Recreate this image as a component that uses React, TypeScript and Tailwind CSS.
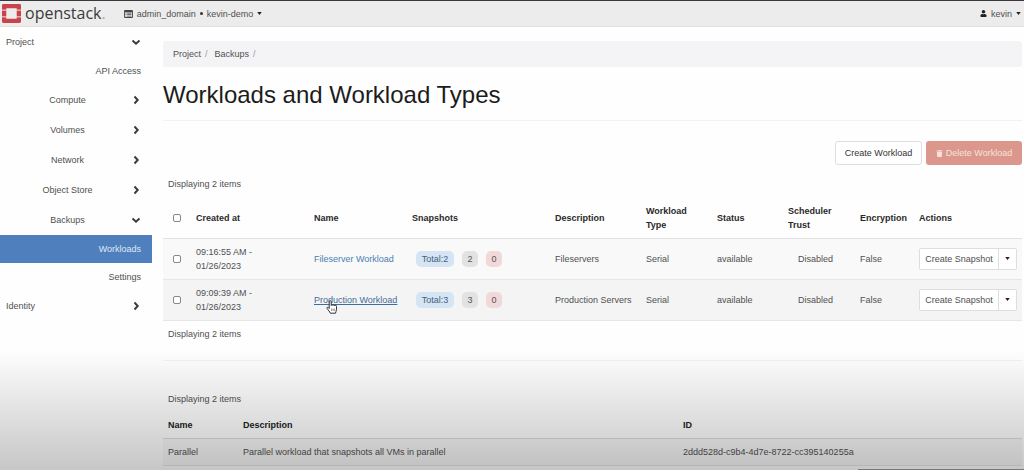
import { FaTrash, FaUser } from "react-icons/fa";

function Caret() {
  return (
    <svg viewBox="0 0 6 4" className="h-[3px] w-[5px] shrink-0 fill-[#222]" aria-hidden="true">
      <path d="M0 0h6L3 4z" />
    </svg>
  );
}

function Chevron({ open }: { open: boolean }) {
  return (
    <svg
      viewBox="0 0 10 10"
      className="size-[10px] shrink-0 fill-none stroke-[#3c3c3c] stroke-2"
      aria-hidden="true"
    >
      <path d={open ? "M1.500 3.500l3.500 3.200 3.500-3.200" : "M3.500 1.500l3.200 3.500-3.200 3.500"} />
    </svg>
  );
}

function Logo() {
  return (
    <a href="#home" className="flex items-center gap-[4px]" aria-label="openstack">
      <svg viewBox="0 0 20 20" className="size-[19px]" aria-hidden="true">
        <path
          fill="#c9434b"
          d="M1.500 0h17A1.500 1.500 0 0 1 20 1.500V6h-4.500V4.500h-11V6H0V1.500A1.500 1.500 0 0 1 1.500 0zM0 7.300h4.500v5.400H0zM15.500 7.300H20v5.400h-4.500zM0 14h4.500v1.500h11V14H20v4.500a1.500 1.500 0 0 1-1.500 1.500h-17A1.500 1.500 0 0 1 0 18.500z"
        />
        <path fill="#e9a3a4" d="M0 6h4.500v1.300H0zM15.500 6H20v1.300h-4.500zM0 12.700h4.500V14H0zM15.500 12.700H20V14h-4.500z" />
      </svg>
      <span className="-mt-[2px] font-['Open_Sans',sans-serif] text-[16px] leading-5 font-medium text-[#3c3a3e]">
        openstack<span className="text-[#aaa]">.</span>
      </span>
    </a>
  );
}

function Header() {
  return (
    <header className="flex h-[27px] items-center justify-between border-t border-b border-t-[#3a383c] border-b-[#e0e0e0] bg-[#ececec] pr-[3px] pl-[2px]">
      <div className="flex items-center gap-[18px]">
        <Logo />
        <button type="button" className="flex items-center gap-[4px]">
          <svg viewBox="0 0 10 9" className="h-[8px] w-[9px]" aria-hidden="true">
            <path
              fill="#444"
              fillRule="evenodd"
              d="M1 0h8a1 1 0 0 1 1 1v7a1 1 0 0 1-1 1H1a1 1 0 0 1-1-1V1a1 1 0 0 1 1-1zM1 2.500v5.500h8V2.500zM1.700 3h1v1h-1zM3.500 3h4.800v1H3.500zM1.700 4.700h1v1h-1zM3.500 4.700h4.800v1H3.500zM1.700 6.400h1v1h-1zM3.500 6.400h4.800v1H3.500z"
            />
          </svg>
          <span>admin_domain</span>
          <span className="size-[3px] rounded-full bg-[#333]" />
          <span>kevin-demo</span>
          <Caret />
        </button>
      </div>
      <button type="button" className="flex items-center gap-[4px]">
        <FaUser className="size-[7px] text-[#222]" />
        <span>kevin</span>
        <Caret />
      </button>
    </header>
  );
}

function TopGroup({ label, open }: { label: string; open: boolean }) {
  return (
    <button
      type="button"
      aria-expanded={open}
      className="flex h-[30px] w-full items-center justify-between pr-[11px] pl-[6px]"
    >
      {label}
      <Chevron open={open} />
    </button>
  );
}

function Group({ label, open = false }: { label: string; open?: boolean }) {
  return (
    <button type="button" aria-expanded={open} className="flex h-[30px] w-full items-center pr-[11px] pl-[4px]">
      <span className="flex-1 text-center">{label}</span>
      <Chevron open={open} />
    </button>
  );
}

function Leaf({ label, active = false }: { label: string; active?: boolean }) {
  return (
    <a
      href="#panel"
      className={
        active
          ? "flex h-[28px] items-center justify-end bg-[#4f80bd] pr-[11px] text-[#dfe8f4]"
          : "flex h-[28px] items-center justify-end pr-[11px]"
      }
    >
      {label}
    </a>
  );
}

function Sidebar() {
  return (
    <nav className="w-[152px] shrink-0">
      <TopGroup label="Project" open />
      <Leaf label="API Access" />
      <Group label="Compute" />
      <Group label="Volumes" />
      <Group label="Network" />
      <Group label="Object Store" />
      <Group label="Backups" open />
      <Leaf label="Workloads" active />
      <Leaf label="Settings" />
      <TopGroup label="Identity" open={false} />
    </nav>
  );
}

function CheckBox({ label }: { label: string }) {
  return (
    <input
      type="checkbox"
      aria-label={label}
      className="mx-auto block size-2 appearance-none rounded-[2px] border border-[#888] bg-white"
    />
  );
}

function HandCursor() {
  return (
    <svg viewBox="0 0 12 14" className="absolute top-[5px] left-[12px] z-10 h-[14px] w-[12px]" aria-hidden="true">
      <path
        d="M3.200 8.500V1.700a1 1 0 0 1 2 0V5.500a.9.900 0 0 1 1.800 0 .9.900 0 0 1 1.800.4 .9.900 0 0 1 1.700.6v3.200c0 1.500-1 2-1 3.500H4.300C4 11.600 2.300 10.600 1 8.300c-.4-.9.700-1.400 1.300-.8z"
        fill="#fff"
        stroke="#333"
        strokeWidth="1"
        strokeLinejoin="round"
      />
      <path d="M5.600 8.500v2.500M7.100 8.500v2.500M8.600 8.500v2.500" stroke="#555" strokeWidth=".6" />
    </svg>
  );
}

const workloads = [
  { time: "09:16:55 AM -", date: "01/26/2023", name: "Fileserver Workload", total: 2, description: "Fileservers", hovered: false },
  { time: "09:09:39 AM -", date: "01/26/2023", name: "Production Workload", total: 3, description: "Production Servers", hovered: true },
];

function WorkloadTable() {
  return (
    <table className="mt-[7px] w-full table-fixed border-collapse text-left">
      <colgroup>
        <col className="w-[28px]" />
        <col className="w-[118px]" />
        <col className="w-[98px]" />
        <col className="w-[143px]" />
        <col className="w-[91px]" />
        <col className="w-[71px]" />
        <col className="w-[71px]" />
        <col className="w-[72px]" />
        <col className="w-[59px]" />
        <col className="w-[108px]" />
      </colgroup>
      <thead>
        <tr className="h-[40px] border-b border-[#e2e2e2] text-[#2a2a2a]">
          <th>
            <CheckBox label="Select all workloads" />
          </th>
          <th className="px-[5px]">Created at</th>
          <th className="px-[5px]">Name</th>
          <th className="px-[5px]">Snapshots</th>
          <th className="px-[5px]">Description</th>
          <th className="px-[5px]">
            Workload
            <br />
            Type
          </th>
          <th className="px-[5px]">Status</th>
          <th className="px-[5px]">
            Scheduler
            <br />
            Trust
          </th>
          <th className="px-[5px]">Encryption</th>
          <th className="px-[5px]">Actions</th>
        </tr>
      </thead>
      <tbody>
        {workloads.map((w) => (
          <tr
            key={w.name}
            className={
              w.hovered
                ? "h-[41px] border-b border-[#e6e6e6] bg-[#f4f4f5]"
                : "h-[41px] border-b border-[#e6e6e6] bg-[#f9f9fa]"
            }
          >
            <td>
              <CheckBox label={`Select ${w.name}`} />
            </td>
            <td className="px-[5px]">
              {w.time}
              <br />
              {w.date}
            </td>
            <td className="px-[5px] whitespace-nowrap">
              <span className="relative">
                <a href="#workload" className={w.hovered ? "text-[#3f6c9a] underline" : "text-[#4a7fb0]"}>
                  {w.name}
                </a>
                {w.hovered && <HandCursor />}
              </span>
            </td>
            <td className="px-[9px]">
              <div className="flex gap-2 text-[#555]">
                <span className="w-[38px] rounded-[5px] bg-[#d5e5f3] py-px text-center text-[#44617c]">Total:{w.total}</span>
                <span className="w-4 rounded-[5px] bg-[#e2e2e2] py-px text-center">{w.total}</span>
                <span className="w-4 rounded-[5px] bg-[#f2d9d9] py-px text-center">0</span>
              </div>
            </td>
            <td className="px-[5px] whitespace-nowrap">{w.description}</td>
            <td className="px-[5px]">Serial</td>
            <td className="px-[5px]">available</td>
            <td className="pl-[15px]">Disabled</td>
            <td className="px-[5px]">False</td>
            <td className="px-[5px]">
              <div className="flex h-[22px] rounded-[2px] border border-[#dedede] bg-white">
                <button type="button" className="flex-1 whitespace-nowrap">
                  Create Snapshot
                </button>
                <button
                  type="button"
                  aria-label="More actions"
                  className="flex w-[18px] items-center justify-center border-l border-[#dedede]"
                >
                  <Caret />
                </button>
              </div>
            </td>
          </tr>
        ))}
      </tbody>
    </table>
  );
}

function TypesTable() {
  return (
    <table className="mt-[7px] w-full table-fixed border-collapse text-left">
      <colgroup>
        <col className="w-[75px]" />
        <col className="w-[440px]" />
        <col className="w-[344px]" />
      </colgroup>
      <thead>
        <tr className="h-[26px] border-b border-[#dedede] text-[#222]">
          <th className="px-[5px]">Name</th>
          <th className="px-[5px]">Description</th>
          <th className="px-[5px]">ID</th>
        </tr>
      </thead>
      <tbody>
        <tr className="h-[27px] border-b border-[#e6e6e6] bg-[#f7f7f8]">
          <td className="px-[5px]">Parallel</td>
          <td className="px-[5px]">Parallel workload that snapshots all VMs in parallel</td>
          <td className="px-[5px]">2ddd528d-c9b4-4d7e-8722-cc395140255a</td>
        </tr>
      </tbody>
    </table>
  );
}

export default function App() {
  return (
    <div className="relative min-h-screen bg-[#fefefe] font-['Liberation_Sans',Arial,sans-serif] text-[9px] leading-[14px] text-[#505050]">
      <Header />
      <div className="flex">
        <Sidebar />
        <main className="min-w-0 flex-1 pt-[14px] pr-[2px] pl-[11px]">
          <nav aria-label="Breadcrumb" className="flex h-[26px] items-center gap-[4px] rounded-[3px] bg-[#f4f4f6] px-[10px]">
            <a href="#project">Project</a>
            <span className="text-[#999]">/</span>
            <a href="#backups" className="ml-[3px]">
              Backups
            </a>
            <span className="text-[#999]">/</span>
          </nav>
          <h1 className="mt-3 border-b border-[#f2f2f2] pb-[9px] text-[24px] leading-8 text-[#1c1c1c]">
            Workloads and Workload Types
          </h1>
          <div className="mt-5 flex justify-end gap-1">
            <button type="button" className="h-6 w-[87px] rounded-[3px] border border-[#dedede] bg-white text-[#333]">
              Create Workload
            </button>
            <button
              type="button"
              className="flex h-6 w-[96px] items-center justify-center gap-[3px] rounded-[3px] bg-[#db978c] text-[#f7e2de]"
            >
              <FaTrash className="size-[7px]" />
              Delete Workload
            </button>
          </div>
          <p className="mt-3 pl-[5px]">Displaying 2 items</p>
          <WorkloadTable />
          <p className="mt-[6px] pl-[5px]">Displaying 2 items</p>
          <hr className="mt-[19px] border-[#f2f2f2]" />
          <p className="mt-[31px] pl-[5px]">Displaying 2 items</p>
          <TypesTable />
        </main>
      </div>
      <div className="pointer-events-none absolute inset-x-0 bottom-0 flex h-[120px] flex-col items-end justify-end bg-linear-to-b from-black/0 to-black/22">
        <div className="h-px w-[166px] bg-[#777]" />
      </div>
    </div>
  );
}
